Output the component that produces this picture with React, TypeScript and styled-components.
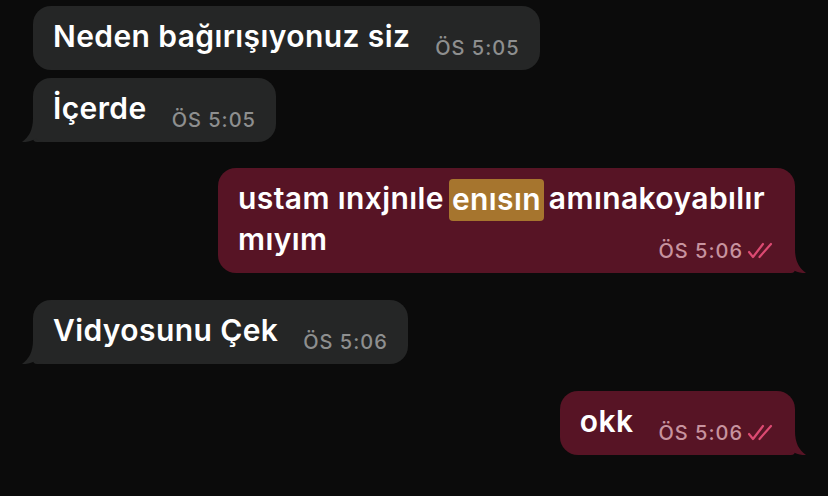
import React from "react";
import styled, { createGlobalStyle } from "styled-components";

const Global = createGlobalStyle`
  html, body { margin: 0; padding: 0; background: #0b0b0b; }
  body { font-family: Inter, "Noto Sans", sans-serif; -webkit-font-smoothing: antialiased; }
`;

const Chat = styled.div`
  width: 828px;
  height: 496px;
  box-sizing: border-box;
  padding: 6px 33px 0 33px;
  display: flex;
  flex-direction: column;
  overflow: hidden;
  background: #0b0b0b;
`;

const Row = styled.div<{ $out?: boolean; $gap: number }>`
  display: flex;
  justify-content: ${(p) => (p.$out ? "flex-end" : "flex-start")};
  margin-top: ${(p) => p.$gap}px;
`;

const Bubble = styled.div<{ $out?: boolean; $tail?: boolean }>`
  position: relative;
  box-sizing: border-box;
  max-width: 577px;
  padding: 10px 20px 13px 20px;
  border-radius: 18px;
  ${(p) =>
    p.$tail
      ? p.$out
        ? "border-bottom-right-radius: 4px;"
        : "border-bottom-left-radius: 4px;"
      : ""}
  background: ${(p) => (p.$out ? "#571425" : "#252626")};
  color: #ffffff;
  font-size: 30px;
  font-weight: 600;
  line-height: 41px;
  letter-spacing: 0.4px;
`;

const Mark = styled.span`
  background: #a6752e;
  border-radius: 4px;
  padding: 1.5px 3px 5px 3px;
  margin: 0 -3px;
`;

const Meta = styled.span<{ $out?: boolean }>`
  float: right;
  display: inline-flex;
  align-items: center;
  margin: 22px 0 -2px 25px;
  height: 20px;
  font-size: 20px;
  line-height: 20px;
  font-weight: 500;
  letter-spacing: 1px;
  color: ${(p) => (p.$out ? "#c7939f" : "#8e8f8f")};
  white-space: nowrap;
`;

const Checks = styled.svg`
  width: 28px;
  height: 17px;
  margin-left: 4px;
  margin-top: -2px;
`;

const Tail = styled.svg<{ $out?: boolean }>`
  position: absolute;
  bottom: 0;
  width: 21px;
  height: 24px;
  ${(p) =>
    p.$out ? "right: -11px; transform: scaleX(-1);" : "left: -11px;"}
`;

function BubbleTail({ out }: { out?: boolean }) {
  return (
    <Tail $out={out} viewBox="0 0 21 24">
      <path
        d="M11 0 C11 12 7 19 0 24 C5 24.4 10 23 14 20.6 C16 22.6 18 24 21 24 L21 0 Z"
        fill={out ? "#571425" : "#252626"}
      />
    </Tail>
  );
}

function DoubleCheck() {
  return (
    <Checks viewBox="0 0 28 17">
      <g
        fill="none"
        stroke="#dc4a72"
        strokeWidth="2.2"
        strokeLinecap="round"
        strokeLinejoin="round"
      >
        <path d="M2 10 L6 15 L16 2" />
        <path d="M12.5 15 L24 2" />
      </g>
    </Checks>
  );
}

type Msg = {
  out?: boolean;
  tail?: boolean;
  gap: number;
  time: string;
  content: React.ReactNode;
};

const messages: Msg[] = [
  { gap: 0, time: "ÖS 5:05", content: "Neden bağırışıyonuz siz" },
  { gap: 8, tail: true, time: "ÖS 5:05", content: "İçerde" },
  {
    gap: 26,
    out: true,
    tail: true,
    time: "ÖS 5:06",
    content: (
      <>
        ustam ınxjnıle <Mark>enısın</Mark> amınakoyabılır mıyım
      </>
    ),
  },
  { gap: 27, tail: true, time: "ÖS 5:06", content: "Vidyosunu Çek" },
  { gap: 27, out: true, tail: true, time: "ÖS 5:06", content: "okk" },
];

export default function App() {
  return (
    <>
      <Global />
      <Chat>
        {messages.map((m, i) => (
          <Row key={i} $out={m.out} $gap={m.gap}>
            <Bubble $out={m.out} $tail={m.tail}>
              {m.content}
              <Meta $out={m.out}>
                {m.time}
                {m.out && <DoubleCheck />}
              </Meta>
              {m.tail && <BubbleTail out={m.out} />}
            </Bubble>
          </Row>
        ))}
      </Chat>
    </>
  );
}
